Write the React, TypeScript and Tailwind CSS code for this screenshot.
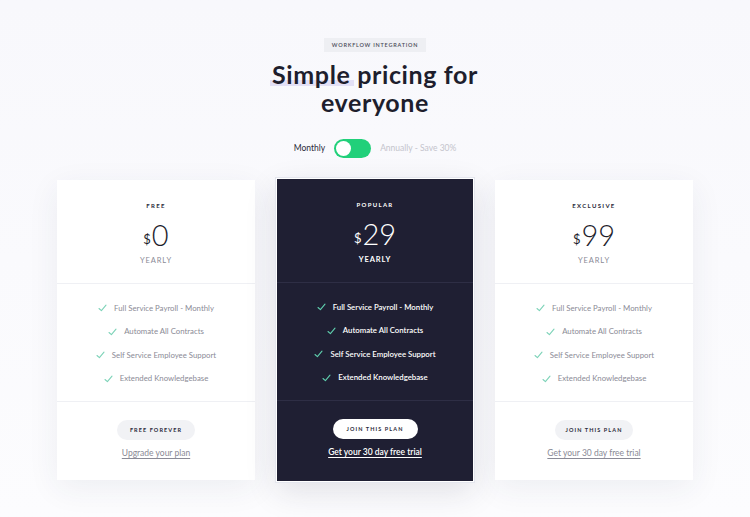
import React from "react";

const font = { fontFamily: "Lato, 'Open Sans', sans-serif" };

function Check({ dark }: { dark?: boolean }) {
  return (
    <svg width="9" height="8" viewBox="0 0 9 8" className="shrink-0">
      <path d="M1 4.5 L3.4 6.6 L8 1.2" fill="none" stroke={dark ? "#5fcfae" : "#7dd3b8"} strokeWidth="1.1" strokeLinecap="round" strokeLinejoin="round" />
    </svg>
  );
}

const features = [
  "Full Service Payroll - Monthly",
  "Automate All Contracts",
  "Self Service Employee Support",
  "Extended Knowledgebase",
];

function Card({ title, price, button, link, dark }: { title: string; price: string; button: string; link: string; dark?: boolean }) {
  return (
    <div
      className={
        dark
          ? "w-[198px] -my-[2px] flex flex-col bg-[#1f1f33] border border-white shadow-[0_0_0_1px_#e4e6ee,0_10px_30px_rgba(30,30,60,0.12)]"
          : "w-[198px] flex flex-col bg-white shadow-[0_8px_30px_rgba(40,50,90,0.07)]"
      }
    >
      <div className={"h-[104px] shrink-0 flex flex-col items-center pt-[21px] border-b " + (dark ? "border-[#2e2e45]" : "border-[#eff0f4]")}>
        <div className={"text-[6px] font-bold tracking-[0.22em] " + (dark ? "text-white" : "text-[#2a2a3a]")}>{title}</div>
        <div className={"flex items-end mt-[13px] leading-none " + (dark ? "text-white" : "text-[#1e1e2d]")}>
          <span className="text-[13px] mb-[1px] mr-[1px]">$</span>
          <span className="text-[29px] font-light leading-[24px]">{price}</span>
        </div>
        <div className={"mt-[8px] text-[7.5px] tracking-[0.12em] " + (dark ? "text-white font-bold" : "text-[#8a8a96]")}>YEARLY</div>
      </div>
      <div className={"h-[118px] shrink-0 flex flex-col items-center pt-[18px] gap-[11.5px] border-b " + (dark ? "border-[#2e2e45]" : "border-[#eff0f4]")}>
        {features.map((f) => (
          <div key={f} className={"flex items-center gap-[7px] h-[12px] text-[7.8px] " + (dark ? "text-white font-semibold" : "text-[#8b8b96]")}>
            <Check dark={dark} />
            <span className="mt-[1px]">{f}</span>
          </div>
        ))}
      </div>
      <div className="flex-1 flex flex-col items-center pt-[18px]">
        <div className={"h-[20px] rounded-full flex items-center justify-center text-[5.5px] font-bold tracking-[0.2em] " + (dark ? "bg-white text-[#2a2a3a] w-[85px]" : "bg-[#f1f2f5] text-[#2a2a3a] w-[78px]")}>
          {button}
        </div>
        <div className={"mt-[7px] text-[8.5px] underline underline-offset-[2px] " + (dark ? "text-white font-semibold" : "text-[#8a8a96]")}>{link}</div>
      </div>
    </div>
  );
}

export default function App() {
  return (
    <div style={font} className="w-[750px] h-[517px] overflow-hidden bg-gradient-to-b from-[#f8f8fc] to-[#fcfcfe] flex flex-col items-center">
      <div className="mt-[38px] h-[14px] px-[8px] bg-[#eeeff3] flex items-center text-[5.5px] font-semibold tracking-[0.14em] text-[#4a4a58]">
        WORKFLOW INTEGRATION
      </div>
      <h1 className="mt-[8px] text-center text-[25px] font-bold leading-[28px] text-[#1e1e2d] tracking-[0.025em]">
        <span className="relative inline-block">
          <span className="absolute left-[-2px] right-[-4px] bottom-[2px] h-[6px] bg-[#e3e0f6]"></span>
          <span className="relative">Simple</span>
        </span>{" "}
        pricing for
        <br />
        everyone
      </h1>
      <div className="mt-[23px] flex items-center">
        <span className="text-[8.5px] text-[#2a2a3a]">Monthly</span>
        <div className="ml-[9px] w-[37px] h-[19px] rounded-full bg-[#21d07a] flex items-center px-[2px]">
          <div className="w-[15px] h-[15px] rounded-full bg-white"></div>
        </div>
        <span className="ml-[9px] text-[8.5px] text-[#c4c4cc]">Annually - Save 30%</span>
      </div>
      <div className="mt-[22px] flex gap-[21px] h-[300px]">
        <Card title="FREE" price="0" button="FREE FOREVER" link="Upgrade your plan" />
        <Card title="POPULAR" price="29" button="JOIN THIS PLAN" link="Get your 30 day free trial" dark />
        <Card title="EXCLUSIVE" price="99" button="JOIN THIS PLAN" link="Get your 30 day free trial" />
      </div>
    </div>
  );
}
